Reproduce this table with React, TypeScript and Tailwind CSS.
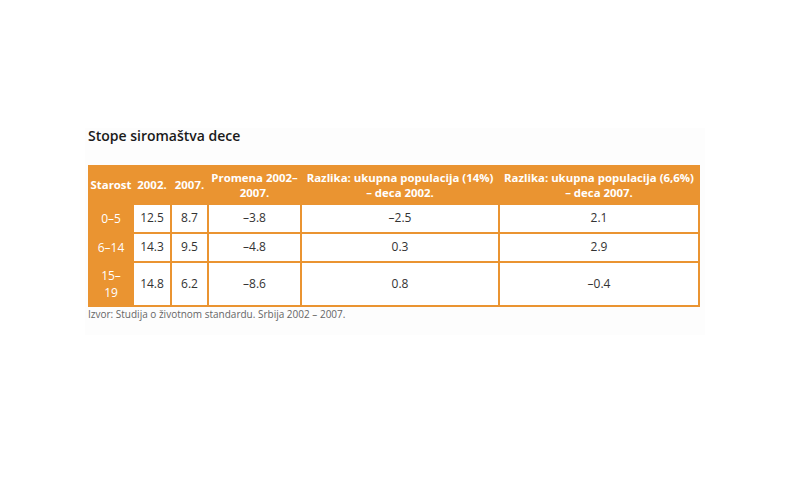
import React from "react";

const rows = [
  { age: ["0–5"], a: "12.5", b: "8.7", c: "–3.8", d: "–2.5", e: "2.1" },
  { age: ["6–14"], a: "14.3", b: "9.5", c: "–4.8", d: "0.3", e: "2.9" },
  { age: ["15–", "19"], a: "14.8", b: "6.2", c: "–8.6", d: "0.8", e: "–0.4" },
];

const head = "flex items-center justify-center text-center text-white font-bold text-[11.4px] leading-[15px]";
const cell = "bg-white flex items-center justify-center text-[#333] text-[12px]";

export default function App() {
  return (
    <div
      className="w-[800px] h-[500px] bg-white pl-[85px] pt-[128px]"
      style={{ fontFamily: '"Open Sans", "Noto Sans", sans-serif' }}
    >
      <div className="w-[620px] bg-[#fdfdfd] pl-[3px] pb-[14px]">
        <h1 className="text-[14px] leading-[16px] font-semibold text-[#1a1a1a]">
          Stope siromaštva dece
        </h1>
        <div className="mt-[20.5px] w-[612px] bg-[#EA9431] p-[2px] grid grid-cols-[42px_36px_35px_91px_196px_198px] grid-rows-[36px_27px_27px_42px] gap-[2px]">
          <div className={head}>Starost</div>
          <div className={head}>2002.</div>
          <div className={head}>2007.</div>
          <div className={head}>
            Promena 2002–
            <br />
            2007.
          </div>
          <div className={head}>
            Razlika: ukupna populacija (14%)
            <br />
            – deca 2002.
          </div>
          <div className={head}>
            Razlika: ukupna populacija (6,6%)
            <br />
            – deca 2007.
          </div>
          {rows.map((r, i) => (
            <React.Fragment key={i}>
              <div className="flex flex-col items-center justify-center text-white text-[12px] leading-[17px]">
                {r.age.map((t) => (
                  <span key={t}>{t}</span>
                ))}
              </div>
              <div className={cell}>{r.a}</div>
              <div className={cell}>{r.b}</div>
              <div className={cell}>{r.c}</div>
              <div className={cell}>{r.d}</div>
              <div className={cell}>{r.e}</div>
            </React.Fragment>
          ))}
        </div>
        <p className="text-[10px] leading-[14px] text-[#666]">
          Izvor: Studija o životnom standardu. Srbija 2002 – 2007.
        </p>
      </div>
    </div>
  );
}
